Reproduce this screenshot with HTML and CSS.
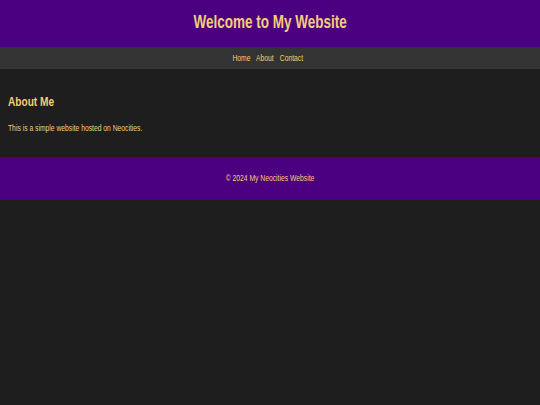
FILE: index.html
```html
<!DOCTYPE html>
<html lang="en">
<head>
<meta charset="utf-8">
<title>My Neocities Website</title>
<link rel="stylesheet" href="styles.css">
</head>
<body>
  <header class="site-header">
    <h1 class="site-title"><span class="narrow">Welcome to My Website</span></h1>
  </header>
  <nav class="site-nav">
    <span class="narrow"><a href="#">Home</a> <a href="#">About</a> <a href="#">Contact</a></span>
  </nav>
  <main class="content">
    <h2 class="section-title"><span class="narrow narrow-left">About Me</span></h2>
    <p class="section-text"><span class="narrow narrow-left">This is a simple website hosted on Neocities.</span></p>
  </main>
  <footer class="site-footer">
    <p><span class="narrow">&copy; 2024 My Neocities Website</span></p>
  </footer>
</body>
</html>
```

FILE: styles.css
```css
html {
  background: #1e1e1e;
}
body {
  margin: 0;
  font-family: "Liberation Sans", Arial, sans-serif;
  color: #f5cd79;
}
.narrow {
  display: inline-block;
  transform: scaleX(0.75);
  transform-origin: 50% 50%;
  white-space: nowrap;
}
.narrow-left {
  transform-origin: 0 50%;
}
.site-header {
  background: #4b0082;
  padding: 11px 0 13px;
  text-align: center;
}
.site-title {
  margin: 0;
  font-size: 18px;
  line-height: 22.5px;
  font-weight: bold;
}
.site-nav {
  background: #333333;
  text-align: center;
  padding: 5px 0;
  font-size: 9px;
  line-height: 12.5px;
}
.site-nav a {
  color: #f5cd79;
  text-decoration: none;
  margin-right: 5.5px;
}
.content {
  padding: 24px 8px 23px;
}
.section-title {
  margin: 0 0 12px;
  font-size: 13.5px;
  line-height: 17px;
  font-weight: bold;
}
.section-text {
  margin: 0;
  font-size: 9px;
  line-height: 12px;
}
.site-footer {
  background: #4b0082;
  text-align: center;
  padding: 15px 0;
  font-size: 9px;
  line-height: 12.5px;
}
.site-footer p {
  margin: 0;
}
```
